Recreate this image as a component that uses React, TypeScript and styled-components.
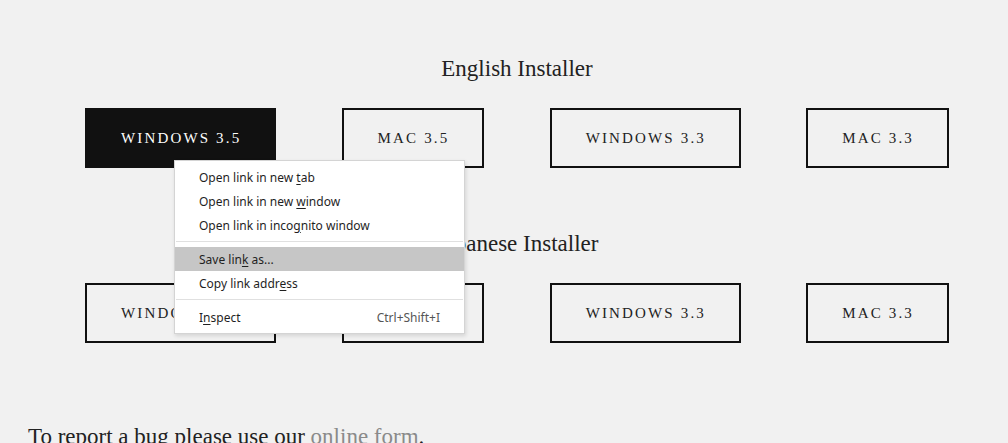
import styled, { createGlobalStyle } from "styled-components";

const GlobalStyle = createGlobalStyle`
  html, body {
    margin: 0;
    padding: 0;
    background: #f1f1f1;
  }
  body {
    font-family: "Liberation Serif", "Times New Roman", serif;
    color: #222;
    overflow: hidden;
  }
`;

const Page = styled.div`
  position: relative;
  width: 1008px;
  height: 443px;
  overflow: hidden;
  padding-top: 55px;
  box-sizing: border-box;
`;

const Main = styled.main`
  padding: 0 59px 0 85px;
`;

const Section = styled.section`
  margin-bottom: 62px;
  &:last-child {
    margin-bottom: 0;
  }
`;

const Heading = styled.h2`
  margin: 0 0 25px 0;
  font-size: 23px;
  line-height: 28px;
  font-weight: normal;
  text-align: center;
  color: #222;
`;

const Row = styled.div`
  display: flex;
  justify-content: space-between;
`;

interface ButtonProps {
  $active?: boolean;
}

const DownloadButton = styled.a<ButtonProps>`
  display: flex;
  align-items: center;
  justify-content: center;
  box-sizing: border-box;
  height: 60px;
  padding: 0 33px 0 34px;
  border: 2px solid #111;
  background: ${(p) => (p.$active ? "#111" : "transparent")};
  color: ${(p) => (p.$active ? "#fff" : "#222")};
  font-size: 15px;
  letter-spacing: 2.15px;
  text-transform: uppercase;
  text-decoration: none;
  white-space: nowrap;
`;

const Footer = styled.p`
  margin: 81px 0 0 28px;
  font-size: 23px;
  line-height: 26px;
  color: #222;
`;

const FormLink = styled.a`
  color: #8a8a8a;
  text-decoration: none;
`;

const Menu = styled.div`
  position: absolute;
  left: 174px;
  top: 160px;
  width: 291px;
  box-sizing: border-box;
  padding: 4px 0;
  background: #fff;
  border: 1px solid #d4d4d4;
  box-shadow: 1px 2px 4px rgba(0, 0, 0, 0.12);
  font-family: "Noto Sans", "Open Sans", sans-serif;
  font-size: 12px;
  color: #1f1f1f;
`;

interface ItemProps {
  $hover?: boolean;
}

const MenuItem = styled.div<ItemProps>`
  display: flex;
  justify-content: space-between;
  align-items: center;
  height: 24px;
  padding: 0 24px 0 24px;
  background: ${(p) => (p.$hover ? "#c6c6c6" : "transparent")};
  white-space: nowrap;
`;

const Shortcut = styled.span`
  color: #555;
`;

const Separator = styled.div`
  height: 1px;
  margin: 4px 1px 5px;
  background: #e0e0e0;
`;

const Key = styled.span`
  text-decoration: underline;
  text-underline-offset: 2px;
`;

const english = [
  { label: "Windows 3.5", active: true },
  { label: "Mac 3.5" },
  { label: "Windows 3.3" },
  { label: "Mac 3.3" },
];

const japanese = [
  { label: "Windows 3.5" },
  { label: "Mac 3.5" },
  { label: "Windows 3.3" },
  { label: "Mac 3.3" },
];

const App = () => {
  return (
    <Page>
      <GlobalStyle />
      <Main>
        <Section>
          <Heading>English Installer</Heading>
          <Row>
            {english.map((b) => (
              <DownloadButton key={b.label} href="#" $active={b.active}>
                {b.label}
              </DownloadButton>
            ))}
          </Row>
        </Section>
        <Section>
          <Heading>Japanese Installer</Heading>
          <Row>
            {japanese.map((b) => (
              <DownloadButton key={b.label} href="#">
                {b.label}
              </DownloadButton>
            ))}
          </Row>
        </Section>
      </Main>
      <Footer>
        To report a bug please use our <FormLink href="#">online form</FormLink>.
      </Footer>

      <Menu>
        <MenuItem>
          <span>
            Open link in new <Key>t</Key>ab
          </span>
        </MenuItem>
        <MenuItem>
          <span>
            Open link in new <Key>w</Key>indow
          </span>
        </MenuItem>
        <MenuItem>
          <span>
            Open link in inco<Key>g</Key>nito window
          </span>
        </MenuItem>
        <Separator />
        <MenuItem $hover>
          <span>
            Save lin<Key>k</Key> as...
          </span>
        </MenuItem>
        <MenuItem>
          <span>
            Copy link addr<Key>e</Key>ss
          </span>
        </MenuItem>
        <Separator />
        <MenuItem>
          <span>
            I<Key>n</Key>spect
          </span>
          <Shortcut>Ctrl+Shift+I</Shortcut>
        </MenuItem>
      </Menu>
    </Page>
  );
};

export default App;
